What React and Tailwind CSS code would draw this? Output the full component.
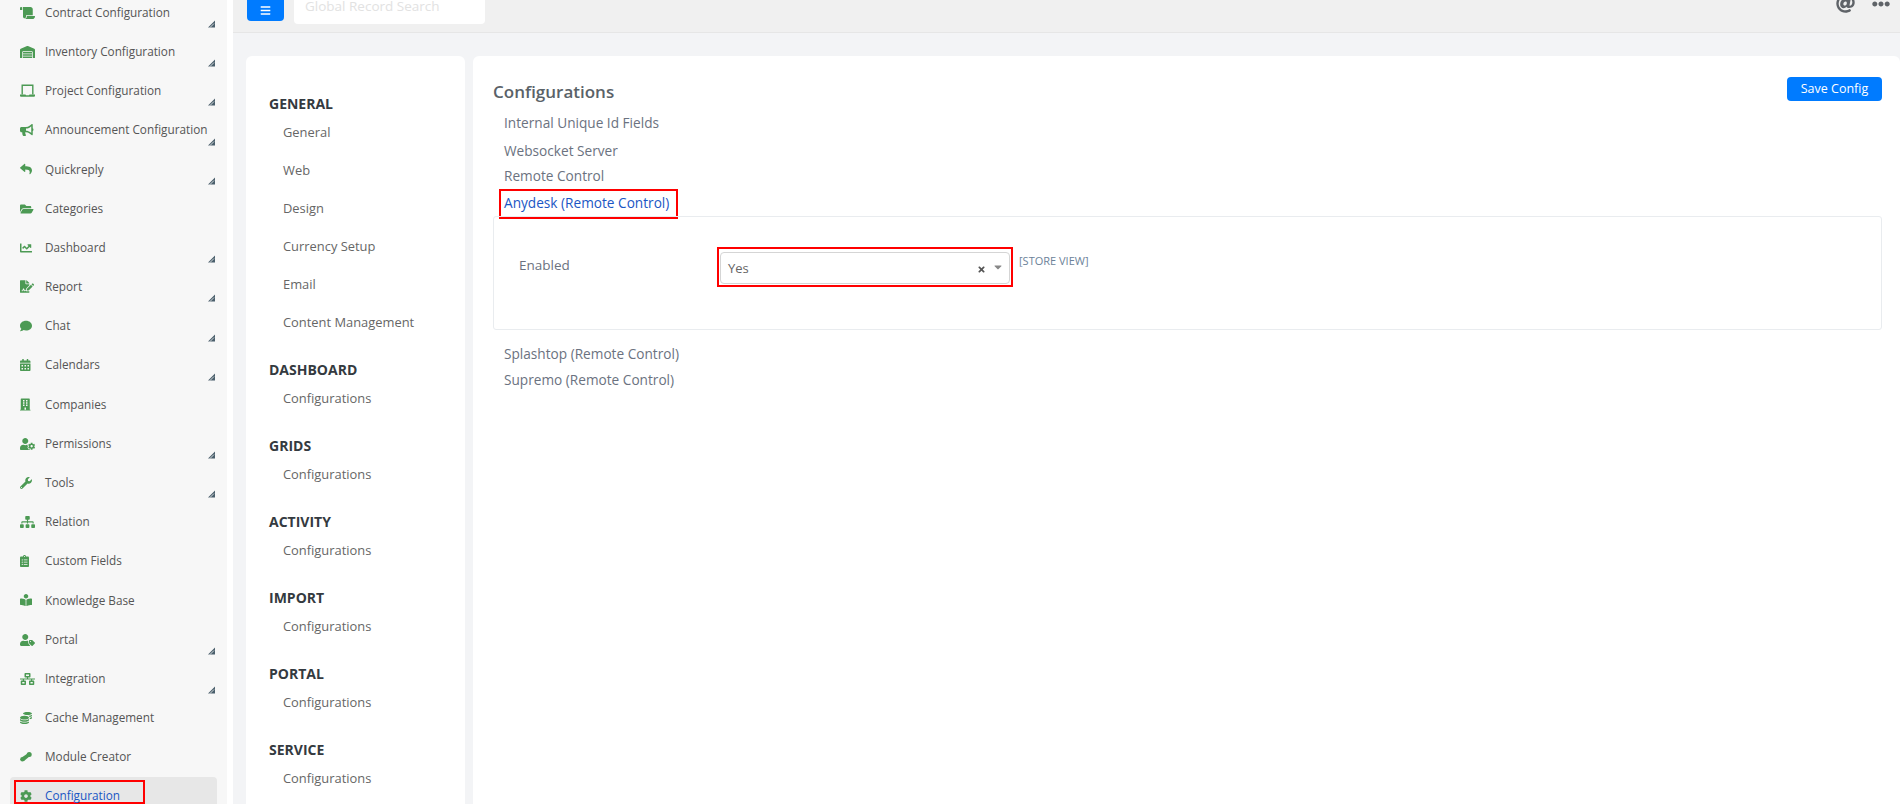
import { FaScroll, FaWarehouse, FaBullhorn, FaReply, FaFolderOpen, FaChartLine, FaFileSignature, FaComment, FaCalendarAlt, FaBuilding, FaUserCog, FaWrench, FaSitemap, FaClipboardList, FaBookReader, FaUserTag, FaNetworkWired, FaCoins, FaCog, FaBars, FaAt, FaEllipsisH, FaTimes, FaCaretDown } from "react-icons/fa";

function LaptopIcon({ className }) {
  return (
    <svg viewBox="0 0 15 13" className={className} fill="#4c9a54">
      <path d="M1.5 0.5h12v10h-1.4v-8.6h-9.2v8.6h-1.4z" />
      <path d="M0 10.5h5.5l.5.8h3l.5-.8h5.5v1.2a1 1 0 0 1-1 1h-13a1 1 0 0 1-1-1z" />
    </svg>
  );
}

function ModuleIcon({ className }) {
  return (
    <svg viewBox="0 0 12 10" className={className} fill="#4c9a54">
      <circle cx="9.2" cy="2.6" r="2.5" />
      <circle cx="2.4" cy="7.2" r="2.2" />
      <path d="M2 5.2 L7.6 1.6 L10 4 L4 9 Z" />
    </svg>
  );
}

const menu = [
  { label: "Contract Configuration", icon: FaScroll, size: "w-[15px] h-[12px]", sub: true },
  { label: "Inventory Configuration", icon: FaWarehouse, size: "w-[15px] h-[12px]", sub: true },
  { label: "Project Configuration", icon: LaptopIcon, size: "w-[15px] h-[13px]", sub: true },
  { label: "Announcement Configuration", icon: FaBullhorn, size: "w-[13.5px] h-[12px]", sub: true },
  { label: "Quickreply", icon: FaReply, size: "w-[12px] h-[12px]", sub: true },
  { label: "Categories", icon: FaFolderOpen, size: "w-[13.5px] h-[12px]" },
  { label: "Dashboard", icon: FaChartLine, size: "w-[12px] h-[12px]", sub: true },
  { label: "Report", icon: FaFileSignature, size: "w-[14px] h-[13px]", sub: true },
  { label: "Chat", icon: FaComment, size: "w-[12px] h-[12px]", sub: true },
  { label: "Calendars", icon: FaCalendarAlt, size: "w-[10.5px] h-[12px]", sub: true },
  { label: "Companies", icon: FaBuilding, size: "w-[10.5px] h-[13px]" },
  { label: "Permissions", icon: FaUserCog, size: "w-[15px] h-[12px]", sub: true },
  { label: "Tools", icon: FaWrench, size: "w-[12px] h-[12px]", sub: true },
  { label: "Relation", icon: FaSitemap, size: "w-[15px] h-[12px]" },
  { label: "Custom Fields", icon: FaClipboardList, size: "w-[9px] h-[12px]" },
  { label: "Knowledge Base", icon: FaBookReader, size: "w-[12px] h-[12px]" },
  { label: "Portal", icon: FaUserTag, size: "w-[15px] h-[12px]", sub: true },
  { label: "Integration", icon: FaNetworkWired, size: "w-[15px] h-[12px]", sub: true },
  { label: "Cache Management", icon: FaCoins, size: "w-[12px] h-[12px]" },
  { label: "Module Creator", icon: ModuleIcon, size: "w-[12px] h-[10px]" },
];

const sections = [
  { title: "GENERAL", items: ["General", "Web", "Design", "Currency Setup", "Email", "Content Management"] },
  { title: "DASHBOARD", items: ["Configurations"] },
  { title: "GRIDS", items: ["Configurations"] },
  { title: "ACTIVITY", items: ["Configurations"] },
  { title: "IMPORT", items: ["Configurations"] },
  { title: "PORTAL", items: ["Configurations"] },
  { title: "SERVICE", items: ["Configurations"] },
];

function Corner() {
  return (
    <svg viewBox="0 0 8 8" className="absolute left-[208px] top-[27px] w-2 h-2">
      <path d="M0 7.5 L7 0.5 V7.5 Z" fill="#4a5f6c" />
      <path d="M2 7.5 L6 3.5" stroke="#f7f7f7" strokeWidth="0.8" />
    </svg>
  );
}

function MenuRow({ item }) {
  const Icon = item.icon;
  return (
    <div className="relative h-[39.2px] pl-5 flex items-center text-[#555]">
      <span className="w-[25px] shrink-0 flex text-[#4c9a54]">
        <Icon className={item.size} />
      </span>
      <span className="whitespace-nowrap">{item.label}</span>
      {item.sub && <Corner />}
    </div>
  );
}

export default function App() {
  return (
    <div className="h-[804px] w-[1900px] overflow-hidden flex bg-white text-[11.75px] font-['Open_Sans',sans-serif]">
      <aside className="w-[227px] shrink-0 bg-[#f7f7f7] mr-[6px] overflow-hidden">
        <div className="-mt-[7px]">
          {menu.map(item => <MenuRow key={item.label} item={item} />)}
          <div className="relative mx-[10px] h-[40px] bg-[#e7e7e7] rounded-[4px] pl-[10px] pt-[3px]">
            <div className="w-[131px] h-[24px] -ml-[6px] border-2 border-[#f00] pl-[4px] pt-[8px] flex items-center text-[#1a56c4]">
              <span className="w-[25px] shrink-0 flex"><FaCog className="w-[12px] h-[12px] text-[#4c9a54]" /></span>
              <span>Configuration</span>
            </div>
          </div>
        </div>
      </aside>

      <main className="flex-1 min-w-0 bg-[#f3f4f6] flex flex-col">
        <header className="h-[33px] shrink-0 bg-[#f0f0f0] border-b border-[#e6e6e6] flex pl-[14px] pr-[10px]">
          <button className="w-[37px] h-[21px] bg-[#007bff] rounded-b-[4px] flex items-center justify-center text-white">
            <FaBars className="text-[11px]" />
          </button>
          <div className="ml-[10px] w-[191px] h-[24px] bg-white rounded-b-[4px] pl-[11px] font-normal text-[13.5px] leading-[13px] text-[#e2e2e2]">
            Global Record Search
          </div>
          <div className="ml-auto flex items-start gap-[17px] text-[#5f6368]">
            <FaAt className="text-[19px] -mt-[6px]" />
            <FaEllipsisH className="text-[18px] -mt-[5px]" />
          </div>
        </header>

        <div className="flex-1 min-h-0 flex gap-2 pt-[23px] pl-[13px]">
          <nav className="w-[219px] bg-white rounded-t-[6px] pt-[39px] pl-[23px]">
            {sections.map(section => (
              <div key={section.title} className="mb-[11px]">
                <h3 className="h-[27px] leading-[18px] font-bold text-[14px] text-[#343a40]">{section.title}</h3>
                {section.items.map(name => (
                  <div key={name} className="h-[38px] pl-[14px] leading-[20px] text-[12.9px] text-[#666] whitespace-nowrap">{name}</div>
                ))}
              </div>
            ))}
          </nav>

          <section className="flex-1 min-w-0 bg-white rounded-t-[6px] pl-[20px] pr-[18px] relative">
            <button className="absolute right-[18px] top-[21px] w-[95px] h-[24px] bg-[#007bff] rounded-[4px] text-white text-[12.5px] font-medium">Save Config</button>
            <h2 className="pt-[25px] h-[57px] text-[17px] leading-[22px] font-semibold text-[#5a6268]">Configurations</h2>
            <div className="pl-[11px] text-[13.65px] text-[#6b7280]">
              <div className="h-[26.5px] leading-[20px]">Internal Unique Id Fields</div>
              <div className="h-[26.5px] leading-[20px] pt-[1px]">Websocket Server</div>
              <div className="h-[26.5px] leading-[20px]">Remote Control</div>
            </div>
            <div className="ml-[6px] -mt-[4px] w-[179px] h-[30px] border-2 border-[#f00] pl-[3px] flex items-center text-[13.65px] text-[#1a56c4]">Anydesk (Remote Control)</div>

            <div className="-mt-[3px] h-[114px] border border-[#e9ecef] rounded-[3px] pl-[25px] pt-[38px] flex items-start">
              <span className="w-[198px] text-[13.5px] text-[#6b7280] leading-[20px]">Enabled</span>
              <div className="-mt-[8px] w-[296px] h-[40px] border-2 border-[#f00] pt-[3px] pb-[1px] px-[1px]">
                <div className="h-full border border-[#d5d5d5] rounded-[4px] flex items-center pl-[7px] pr-[5px] text-[13px] text-[#666]">
                  <span className="flex-1 pt-[2px]">Yes</span>
                  <FaTimes className="text-[9px] text-[#555] mt-[3px]" />
                  <FaCaretDown className="ml-[6px] -mt-[2px] text-[12px] text-[#888]" />
                </div>
              </div>
              <span className="ml-[6px] -mt-[1px] text-[11px] leading-[14px] text-[#6c8299]">[STORE VIEW]</span>
            </div>

            <div className="pl-[11px] pt-[14px] text-[13.65px] text-[#6b7280]">
              <div className="h-[26px] leading-[20px]">Splashtop (Remote Control)</div>
              <div className="h-[26px] leading-[20px]">Supremo (Remote Control)</div>
            </div>
          </section>
        </div>
      </main>
    </div>
  );
}
